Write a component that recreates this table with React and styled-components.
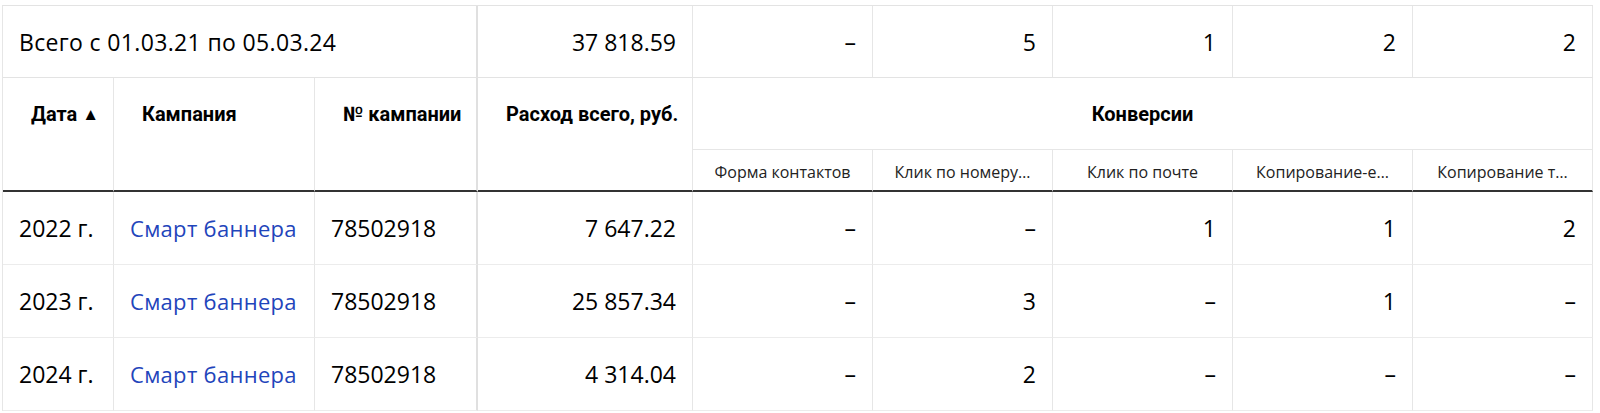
import React from 'react'
import styled, { createGlobalStyle } from 'styled-components'

const GlobalStyle = createGlobalStyle`
  body {
    margin: 0;
    background: #fff;
    font-family: "Open Sans", Roboto, sans-serif;
    color: #000;
  }
`

const widths = [111, 201, 163, 215, 180, 180, 180, 180, 180]

const summary = ['37\u00a0818.59', '–', '5', '1', '2', '2']

const subHeads = [
  'Форма контактов',
  'Клик по номеру…',
  'Клик по почте',
  'Копирование-е…',
  'Копирование т…',
]

const rows = [
  { date: '2022 г.', spend: '7\u00a0647.22', conv: ['–', '–', '1', '1', '2'] },
  { date: '2023 г.', spend: '25\u00a0857.34', conv: ['–', '3', '–', '1', '–'] },
  { date: '2024 г.', spend: '4\u00a0314.04', conv: ['–', '2', '–', '–', '–'] },
]

function App() {
  return (
    <Page>
      <GlobalStyle />
      <Table>
        <colgroup>
          {widths.map((w, i) => (
            <col key={i} style={{ width: w }} />
          ))}
        </colgroup>
        <tbody>
          <tr>
            <SummaryCell colSpan={3} $divider $label>
              Всего с 01.03.21 по 05.03.24
            </SummaryCell>
            {summary.map((v, i) => (
              <SummaryCell key={i} $align="right">
                {v}
              </SummaryCell>
            ))}
          </tr>
          <tr>
            <HeadCell rowSpan={2}>
              Дата <SortArrow>▲</SortArrow>
            </HeadCell>
            <HeadCell rowSpan={2}>Кампания</HeadCell>
            <HeadCell rowSpan={2} $divider>
              № кампании
            </HeadCell>
            <HeadCell rowSpan={2}>Расход всего, руб.</HeadCell>
            <GroupHeadCell colSpan={5}>Конверсии</GroupHeadCell>
          </tr>
          <tr>
            {subHeads.map((t) => (
              <SubHeadCell key={t}>{t}</SubHeadCell>
            ))}
          </tr>
          {rows.map((r) => (
            <tr key={r.date}>
              <Cell>{r.date}</Cell>
              <Cell>
                <CampaignLink href="#">Смарт баннера</CampaignLink>
              </Cell>
              <Cell $divider>78502918</Cell>
              <Cell $align="right">{r.spend}</Cell>
              {r.conv.map((v, i) => (
                <Cell key={i} $align="right">
                  {v}
                </Cell>
              ))}
            </tr>
          ))}
        </tbody>
      </Table>
    </Page>
  )
}

export default App

const Page = styled.div`
  padding: 5px 0 0 2px;
`

const Table = styled.table`
  table-layout: fixed;
  width: 1591px;
  border-collapse: separate;
  border-spacing: 0;
  border-top: 1px solid #e3e3e3;
  border-left: 1px solid #e6e6e6;
`

const BaseCell = styled.td`
  box-sizing: border-box;
  border-right: ${(p) => (p.$divider ? '2px solid #e0e0e0' : '1px solid #e6e6e6')};
  border-bottom: 1px solid #e6e6e6;
  text-align: ${(p) => p.$align || 'left'};
  white-space: nowrap;
  overflow: hidden;
`

const SummaryCell = styled(BaseCell)`
  height: 72px;
  padding: 0 16px;
  font-size: 23px;
  line-height: 28px;
  letter-spacing: ${(p) => (p.$label ? '0.35px' : '0')};
  vertical-align: middle;
  border-bottom-color: #e3e3e3;
`

const HeadCell = styled(BaseCell).attrs({ as: 'th' })`
  padding: 24px 12px 0 28px;
  font-family: Roboto, "Open Sans", sans-serif;
  font-size: 20px;
  font-weight: 700;
  line-height: 24px;
  vertical-align: top;
  text-align: left;
  border-bottom: 2px solid #333;
`

const SortArrow = styled.span`
  font-size: 17px;
  vertical-align: 1px;
`

const GroupHeadCell = styled(BaseCell).attrs({ as: 'th' })`
  height: 72px;
  padding: 0;
  font-family: Roboto, "Open Sans", sans-serif;
  font-size: 20px;
  font-weight: 700;
  text-align: center;
  vertical-align: middle;
  border-right: 1px solid #e6e6e6;
`

const SubHeadCell = styled(BaseCell).attrs({ as: 'th' })`
  height: 42px;
  padding: 4px 8px 0;
  font-size: 16px;
  font-weight: 400;
  line-height: 20px;
  color: #222;
  text-align: center;
  vertical-align: middle;
  border-bottom: 2px solid #333;
`

const Cell = styled(BaseCell)`
  height: 73px;
  padding: 0 16px;
  font-size: 23px;
  line-height: 28px;
  vertical-align: middle;
  border-bottom-color: #ececec;
`

const CampaignLink = styled.a`
  color: #1f45bb;
  text-decoration: none;
  font-size: 22px;
  letter-spacing: 0.3px;
`
